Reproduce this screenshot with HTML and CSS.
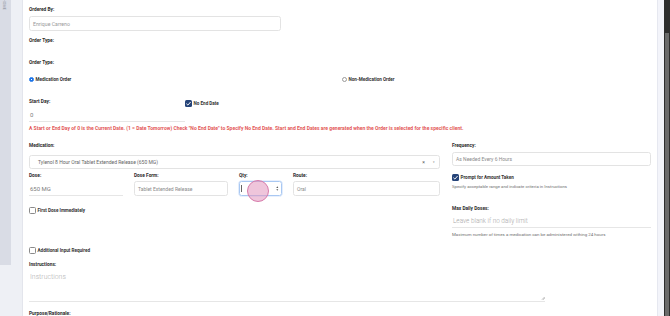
FILE: index.html
```html
<!DOCTYPE html>
<html lang="en">
<head>
  <meta charset="utf-8">
  <meta name="viewport" content="width=device-width, initial-scale=1.0">
  <title>New Order</title>
  <link rel="stylesheet" href="styles.css">
</head>
<body>
  <div class="shell">
    <!-- Collapsed side navigation -->
    <aside class="sidenav">
      <div class="sidenav-tab"><span>HOME</span></div>
    </aside>

    <main class="page">
      <form class="card">
        <!-- Ordered by -->
        <div class="ordered-by">
          <label class="label">Ordered By:</label>
          <div class="box">Enrique Carreno</div>
        </div>

        <label class="label order-type">Order Type:</label>
        <label class="label order-type-2">Order Type:</label>

        <div class="radio-row">
          <span class="choice"><span class="radio on"></span>Medication Order</span>
          <span class="choice"><span class="radio"></span>Non-Medication Order</span>
        </div>

        <!-- Start day / end date -->
        <div class="start-row">
          <div>
            <label class="label">Start Day:</label>
            <div class="line">0</div>
          </div>
          <span class="check-item no-end">
            <span class="check on">
              <svg viewBox="0 0 8 8"><path d="M1.6 4.2 3.3 5.8 6.4 2.3" /></svg>
            </span>No End Date
          </span>
        </div>

        <p class="note">A Start or End Day of 0 is the Current Date. (1 = Date Tomorrow) Check "No End Date" to Specify No End Date. Start and End Dates are generated when the Order is selected for the specific client.</p>

        <!-- Medication details -->
        <div class="med-grid">
          <div class="med-main">
            <label class="label">Medication:</label>
            <div class="box select">
              <span class="select-value">Tylenol 8 Hour Oral Tablet Extended Release (650 MG)</span>
              <span class="select-clear">&times;</span>
              <span class="select-caret">&#9662;</span>
            </div>

            <div class="dose-row">
              <div>
                <label class="label">Dose:</label>
                <div class="line dose">650 MG</div>
              </div>
              <div>
                <label class="label">Dose Form:</label>
                <div class="box">Tablet Extended Release</div>
              </div>
              <div>
                <label class="label">Qty:</label>
                <div class="box qty">
                  <span class="caret"></span>
                  <svg class="spinner" viewBox="0 0 4 8"><path d="M2 0.5 3.6 3H0.4Z M2 7.5 3.6 5H0.4Z" /></svg>
                  <span class="tap"></span>
                </div>
              </div>
              <div>
                <label class="label">Route:</label>
                <div class="box">Oral</div>
              </div>
            </div>

            <span class="check-item first-dose"><span class="check"></span>First Dose Immediately</span>
            <span class="check-item extra-input"><span class="check"></span>Additional Input Required</span>
          </div>

          <div class="med-side">
            <label class="label">Frequency:</label>
            <div class="box frequency">As Needed Every 6 Hours</div>

            <span class="check-item prompt">
              <span class="check on">
                <svg viewBox="0 0 8 8"><path d="M1.6 4.2 3.3 5.8 6.4 2.3" /></svg>
              </span>Prompt for Amount Taken
            </span>
            <p class="help">Specify acceptable range and indicate criteria in Instructions</p>

            <label class="label max-doses">Max Daily Doses:</label>
            <div class="line placeholder">Leave blank if no daily limit</div>
            <p class="help max-help">Maximum number of times a medication can be administered withing 24 hours</p>
          </div>
        </div>

        <!-- Instructions -->
        <label class="label instructions">Instructions:</label>
        <div class="textarea">
          Instructions
          <svg class="grip" viewBox="0 0 6 6"><path d="M5.5 1.5 1.5 5.5 M5.5 3.5 3.5 5.5" /></svg>
        </div>

        <label class="label purpose">Purpose/Rationale:</label>
      </form>

      <div class="gutter"></div>
      <div class="scrollbar"><div class="scrollbar-thumb"></div></div>
    </main>
  </div>
</body>
</html>
```

FILE: styles.css
```css
/* Base */
* {
  box-sizing: border-box;
}

body {
  margin: 0;
  width: 670px;
  height: 316px;
  overflow: hidden;
  background: #eef0f5;
  font-family: Roboto, "Liberation Sans", sans-serif;
  color: #2b2b2b;
}

.shell {
  display: flex;
  height: 316px;
}

/* Side navigation */
.sidenav {
  width: 11px;
  flex: none;
}

.sidenav-tab {
  height: 265px;
  background: #d9dce5;
  padding: 0 0 0 2px;
  overflow: hidden;
}

.sidenav-tab span {
  display: block;
  writing-mode: vertical-rl;
  font-size: 3.6px;
  letter-spacing: 0.2px;
  color: #8d929c;
  margin-top: -1px;
}

/* Page area */
.page {
  flex: 1;
  display: flex;
  padding-left: 11px;
}

.card {
  flex: 1;
  margin: 0;
  padding: 7px 6px 0;
  background: #fff;
  border-left: 1px solid #e3e5ec;
  overflow: hidden;
}

.gutter {
  width: 7px;
  flex: none;
  background: #f3f4fa;
  border-left: 1px solid #e6e8f0;
}

.scrollbar {
  width: 6px;
  flex: none;
  background: #2e2e2e;
  padding: 33px 1px 0;
}

.scrollbar-thumb {
  height: 100%;
  background: #6b6b6b;
}

/* Labels & text */
.label {
  display: block;
  font-size: 4.8px;
  font-weight: 700;
  line-height: 6px;
  color: #2b2b2b;
}

.help {
  margin: 3px 0 0;
  font-size: 4.3px;
  line-height: 6px;
  color: #6f6f6f;
}

.note {
  margin: 3px 0 0;
  font-size: 5.02px;
  font-weight: 700;
  line-height: 6px;
  color: #e35757;
  white-space: nowrap;
}

/* Inputs */
.box {
  display: flex;
  align-items: center;
  height: 15px;
  margin-top: 2px;
  padding: 0 3px;
  border: 1px solid #e3e3e3;
  border-radius: 2.5px;
  font-size: 5px;
  color: #8b8b8b;
  white-space: nowrap;
  overflow: hidden;
}

.line {
  display: flex;
  align-items: center;
  height: 14px;
  margin-top: 3px;
  padding: 0 1px;
  border-bottom: 1px solid #e6e6e6;
  font-size: 6px;
  color: #7d7d7d;
}

.ordered-by {
  width: 252px;
}

.ordered-by .box {
  margin-top: 3px;
  font-size: 5.2px;
  color: #9a9a9a;
}

.order-type {
  margin-top: 7px;
}

.order-type-2 {
  margin-top: 16px;
}

/* Radios & checkboxes */
.radio-row {
  display: grid;
  grid-template-columns: 313px auto;
  margin-top: 10px;
  height: 6px;
}

.choice,
.check-item {
  display: flex;
  align-items: center;
  gap: 1.5px;
  font-size: 4.6px;
  font-weight: 700;
  color: #333;
  white-space: nowrap;
}

.radio {
  width: 5px;
  height: 5px;
  border-radius: 50%;
  border: 0.6px solid #9a9a9a;
  background: #fff;
}

.radio.on {
  border-color: #1a73e8;
  background: radial-gradient(circle, #fff 0 0.7px, #1a73e8 0.9px);
}

.check {
  display: flex;
  width: 7px;
  height: 7px;
  flex: none;
  border: 0.8px solid #8a8a8a;
  border-radius: 1.5px;
  background: #fff;
}

.check.on {
  border: none;
  background: #264479;
}

.check svg {
  width: 7px;
  height: 7px;
  fill: none;
  stroke: #fff;
  stroke-width: 1.1;
}

/* Start day */
.start-row {
  display: grid;
  grid-template-columns: 156px auto;
  margin-top: 17px;
}

.no-end {
  align-self: start;
  margin-top: 1px;
  height: 7px;
}

/* Medication grid */
.med-grid {
  display: grid;
  grid-template-columns: 411px 199px;
  column-gap: 12px;
  margin-top: 12px;
}

.select {
  height: 14px;
  margin-top: 6px;
  padding: 0 2px 0 8px;
  color: #666;
  font-size: 5px;
}

.select-value {
  flex: 1;
}

.select-clear {
  font-size: 5px;
  color: #555;
  margin-right: 8px;
}

.select-caret {
  font-size: 3px;
  color: #888;
  margin-right: 2px;
}

.dose-row {
  display: grid;
  grid-template-columns: 94px 94px 43px 1fr;
  column-gap: 11px;
  margin-top: 4px;
}

.dose-row .line {
  height: 15px;
  margin-top: 2px;
}

.qty {
  position: relative;
  overflow: visible;
  border-color: #a9c8f2;
  box-shadow: 0 0 0 0.6px rgba(120, 170, 240, 0.35);
  justify-content: space-between;
  padding: 0 2px 0 1px;
}

.caret {
  width: 0.5px;
  height: 7px;
  background: #666;
}

.spinner {
  width: 2.6px;
  height: 5px;
  fill: #555;
}

/* Click indicator over the quantity field */
.tap {
  position: absolute;
  left: 7px;
  top: -2px;
  width: 22px;
  height: 22px;
  border-radius: 50%;
  background: rgba(226, 150, 190, 0.55);
  border: 0.8px solid #d77bab;
}

.first-dose {
  margin-top: 11px;
  height: 7px;
}

.extra-input {
  margin-top: 33px;
  height: 7px;
}

.frequency {
  height: 14px;
  margin-top: 3px;
  font-size: 5px;
}

.prompt {
  margin-top: 8px;
  height: 7px;
}

.max-doses {
  margin-top: 16px;
}

.placeholder {
  margin-top: 2px;
  font-size: 6.4px;
  font-weight: 300;
  color: #a8a8a8;
}

.max-help {
  margin-top: 4px;
  font-size: 4.4px;
}

/* Instructions */
.instructions {
  margin-top: 8px;
}

.textarea {
  position: relative;
  width: 516px;
  height: 32px;
  margin-top: 2px;
  padding: 3px 1px 0;
  border-bottom: 1px solid #e6e6e6;
  font-size: 6.9px;
  font-weight: 300;
  line-height: 8px;
  color: #b0b0b0;
}

.grip {
  position: absolute;
  right: 0;
  bottom: 1px;
  width: 4px;
  height: 4px;
  fill: none;
  stroke: #777;
  stroke-width: 0.8;
}

.purpose {
  margin-top: 9px;
}
```
